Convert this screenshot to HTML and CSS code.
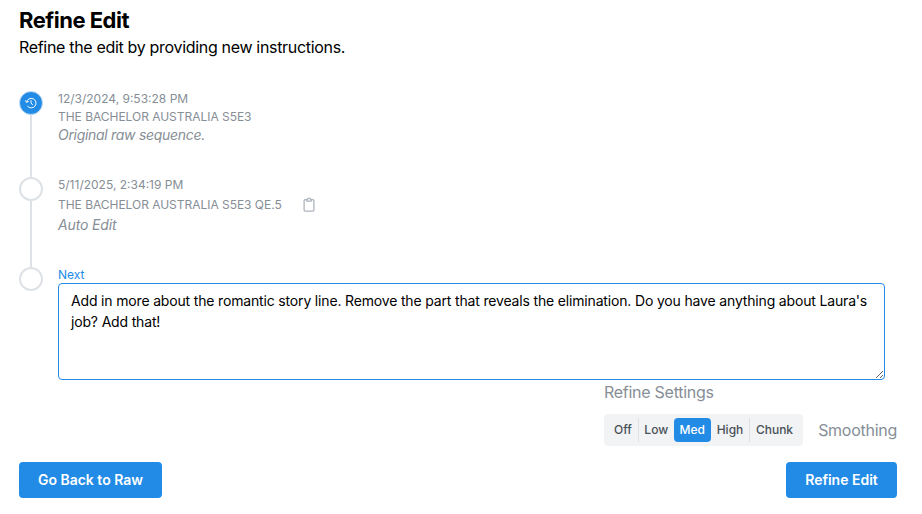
FILE: index.html
```html
<!DOCTYPE html>
<html lang="en">
<head>
    <meta charset="UTF-8">
    <meta name="viewport" content="width=device-width, initial-scale=1.0">
    <title>Refine Edit</title>
    <link rel="stylesheet" href="styles.css">
</head>
<body>
    <h1>Refine Edit</h1>
    <p class="subtitle">Refine the edit by providing new instructions.</p>

    <!-- Edit history -->
    <div class="timeline">
        <div class="item first">
            <div class="rail">
                <div class="bullet active">
                    <svg width="12" height="12" viewBox="0 0 15 15" fill="none" stroke="currentColor" stroke-width="1.2" stroke-linecap="round" stroke-linejoin="round">
                        <path d="M1.9 6.3A6 6 0 1 1 3.3 11.7"/>
                        <path d="M0.6 4.6L1.9 6.6L4.2 5.7"/>
                        <path d="M7.5 4.5V7.5L9.5 9.7"/>
                    </svg>
                </div>
                <div class="line"></div>
            </div>
            <div class="content">
                <div class="date">12/3/2024, 9:53:28 PM</div>
                <div class="name">THE BACHELOR AUSTRALIA S5E3</div>
                <div class="note">Original raw sequence.</div>
            </div>
        </div>

        <div class="item second">
            <div class="rail">
                <div class="bullet"></div>
                <div class="line"></div>
            </div>
            <div class="content">
                <div class="date">5/11/2025, 2:34:19 PM</div>
                <div class="name-row">
                    <span class="name">THE BACHELOR AUSTRALIA S5E3 QE.5</span>
                    <svg class="clipboard" width="16" height="16" viewBox="0 0 16 16" fill="none" stroke="currentColor" stroke-width="1.3" stroke-linejoin="round">
                        <path d="M5.5 2.6H4.2Q3.1 2.6 3.1 3.7V13Q3.1 14.1 4.2 14.1H11.8Q12.9 14.1 12.9 13V3.7Q12.9 2.6 11.8 2.6H10.5"/>
                        <path d="M5.7 4.1V2.4H6.5Q6.7 1.2 8 1.2Q9.3 1.2 9.5 2.4H10.3V4.1Z"/>
                    </svg>
                </div>
                <div class="note short">Auto Edit</div>
            </div>
        </div>

        <div class="item last">
            <div class="rail">
                <div class="bullet"></div>
            </div>
            <div class="content">
                <label class="next" for="instructions">Next</label>
                <textarea id="instructions">Add in more about the romantic story line. Remove the part that reveals the elimination. Do you have anything about Laura's job? Add that!</textarea>
            </div>
        </div>
    </div>

    <!-- Settings -->
    <div class="settings">
        <div class="settings-title">Refine Settings</div>
        <div class="settings-row">
            <div class="segmented">
                <span class="segment off">Off</span>
                <span class="segment low">Low</span>
                <span class="segment selected">Med</span>
                <span class="segment high">High</span>
                <span class="segment chunk">Chunk</span>
            </div>
            <span class="smoothing">Smoothing</span>
        </div>
    </div>

    <div class="actions">
        <button class="back">Go Back to Raw</button>
        <button class="refine">Refine Edit</button>
    </div>
</body>
</html>
```
FILE: styles.css
```css
* {
    box-sizing: border-box;
}

body {
    margin: 0;
    padding: 4px 25px 0 19px;
    font-family: Inter, sans-serif;
    background-color: #fff;
    color: #000;
}

h1 {
    margin: 0;
    font-size: 22px;
    line-height: 32px;
    font-weight: 700;
    letter-spacing: -0.5px;
}

.subtitle {
    margin: 0;
    font-size: 16px;
    line-height: 22px;
    letter-spacing: -0.32px;
}

.timeline {
    margin-top: 33px;
}

.item {
    display: flex;
    gap: 15px;
}

.first {
    height: 86px;
}

.second {
    height: 90px;
}

.last {
    height: 113px;
}

.rail {
    display: flex;
    flex-direction: column;
    align-items: center;
    width: 24px;
}

.bullet {
    display: flex;
    align-items: center;
    justify-content: center;
    flex: none;
    width: 24px;
    height: 24px;
    border: 2px solid #dee2e6;
    border-radius: 50%;
    color: #fff;
}

.active {
    border: 1px solid #c3dcf3;
    background-color: #228be6;
}

.line {
    flex: 1;
    width: 2px;
    background-color: #dee2e6;
}

.content {
    flex: 1;
    margin-top: -1px;
    color: #868e96;
}

.date,
.name {
    font-size: 12px;
    line-height: 18px;
}

.name {
    letter-spacing: -0.03px;
}

.name-row {
    display: flex;
    align-items: center;
    gap: 19px;
    height: 22px;
}

.clipboard {
    margin-top: -1px;
    color: #adb5bd;
}

.note {
    font-size: 14px;
    line-height: 18px;
    font-style: italic;
    letter-spacing: -0.3px;
}

.short {
    letter-spacing: -0.15px;
}

.next {
    display: block;
    font-size: 12px;
    line-height: 17px;
    color: #228be6;
}

textarea {
    display: block;
    width: 827px;
    height: 97px;
    padding: 6px 12px;
    border: 1px solid #228be6;
    border-radius: 4px;
    outline: none;
    font-family: inherit;
    font-size: 14px;
    line-height: 21px;
    letter-spacing: -0.165px;
    color: #000;
}

.settings {
    width: 293px;
    margin-left: 585px;
    color: #868e96;
}

.settings-title {
    font-size: 16px;
    line-height: 25px;
    letter-spacing: -0.27px;
}

.settings-row {
    display: flex;
    align-items: center;
    justify-content: space-between;
    margin-top: 9px;
}

.segmented {
    display: flex;
    width: 199px;
    height: 32px;
    padding: 4px;
    border-radius: 4px;
    background-color: #f1f3f5;
}

.segment {
    height: 24px;
    border-left: 1px solid #dee2e6;
    font-size: 12px;
    line-height: 24px;
    font-weight: 500;
    text-align: center;
    color: #495057;
}

.off {
    width: 30px;
    border-left: none;
}

.low {
    width: 35.5px;
}

.selected {
    width: 37.5px;
    border-left: none;
    border-radius: 4px;
    background-color: #228be6;
    color: #fff;
}

.high {
    width: 38px;
    border-left: none;
}

.chunk {
    width: 50px;
}

.smoothing {
    font-size: 16px;
    letter-spacing: -0.27px;
}

.actions {
    display: flex;
    justify-content: space-between;
    margin-top: 16px;
}

button {
    height: 36px;
    padding: 0 0 2px;
    border: none;
    border-radius: 4px;
    background-color: #228be6;
    color: #fff;
    font-family: inherit;
    font-size: 14px;
    font-weight: 600;
}

.back {
    width: 143px;
}

.refine {
    width: 111px;
}
```
